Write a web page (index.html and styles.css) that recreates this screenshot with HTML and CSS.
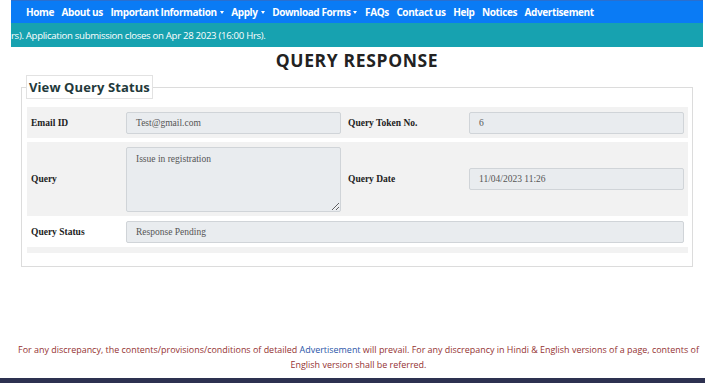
FILE: index.html
```html
<!DOCTYPE html>
<html>
<head>
<meta charset="utf-8">
<link rel="stylesheet" href="styles.css">
</head>
<body>
<div class="page">
  <nav class="nav">
    <a class="nav-link">Home</a>
    <a class="nav-link">About us</a>
    <a class="nav-link dd">Important Information</a>
    <a class="nav-link dd">Apply</a>
    <a class="nav-link dd">Download Forms</a>
    <a class="nav-link">FAQs</a>
    <a class="nav-link">Contact us</a>
    <a class="nav-link">Help</a>
    <a class="nav-link">Notices</a>
    <a class="nav-link">Advertisement</a>
  </nav>
  <div class="ticker"><span class="ticker-text">rs). Application submission closes on Apr 28 2023 (16:00 Hrs).</span></div>
  <h1 class="title">QUERY RESPONSE</h1>
  <fieldset class="box">
    <legend class="legend">View Query Status</legend>
    <div class="row gray r1">
      <div class="lbl">Email ID</div>
      <div class="cell"><div class="ctl">Test@gmail.com</div></div>
      <div class="lbl lbl2">Query Token No.</div>
      <div class="cell"><div class="ctl">6</div></div>
    </div>
    <div class="row gray r2">
      <div class="lbl">Query</div>
      <div class="cell"><textarea class="ctl area" readonly>Issue in registration</textarea></div>
      <div class="lbl lbl2">Query Date</div>
      <div class="cell"><div class="ctl">11/04/2023 11:26</div></div>
    </div>
    <div class="row r3">
      <div class="lbl">Query Status</div>
      <div class="cell wide"><div class="ctl">Response Pending</div></div>
    </div>
    <div class="row gray r4"></div>
  </fieldset>
</div>
<p class="note">For any discrepancy, the contents/provisions/conditions of detailed <a class="link">Advertisement</a> will prevail. For any discrepancy in Hindi &amp; English versions of a page, contents of English version shall be referred.</p>
<div class="bottom-bar"></div>
</body>
</html>
```
FILE: styles.css
```css
html, body {
  margin: 0;
  padding: 0;
  background: #fff;
  height: 383px;
  overflow: hidden;
}
body {
  font-family: "Open Sans", "Liberation Sans", sans-serif;
  position: relative;
}
.page {
  margin-left: 11px;
  width: 692px;
}
.nav {
  height: 23px;
  background: #0a7bf5;
  display: flex;
  align-items: center;
  gap: 7.6px;
  padding-left: 15px;
  border-top: 1px solid #2a6fcf;
  box-sizing: border-box;
}
.nav-link {
  color: #fff;
  font-weight: 700;
  font-size: 10px;
  letter-spacing: -0.4px;
  white-space: nowrap;
  display: flex;
  align-items: center;
}
.nav-link.dd::after {
  content: "";
  margin-left: 3px;
  border-left: 2.5px solid transparent;
  border-right: 2.5px solid transparent;
  border-top: 3px solid #fff;
}
.ticker {
  height: 24px;
  background: #17a2b0;
  display: flex;
  align-items: center;
  overflow: hidden;
}
.ticker-text {
  color: #fff;
  font-size: 9.6px;
  letter-spacing: -0.3px;
  white-space: nowrap;
}
.title {
  margin: 1px 0 0 0;
  text-align: center;
  font-size: 17.5px;
  font-weight: 700;
  color: #222;
  line-height: 25px;
  letter-spacing: 0.65px;
}
.box {
  margin: 2px 10px 0 10px;
  padding: 0 4px 13px 5px;
  border: 1px solid #dcdcdc;
  min-width: 0;
}
.legend {
  margin-left: -1px;
  padding: 1px 2px 1px 2px;
  border: 1px solid #e2e2e2;
  font-size: 13px;
  font-weight: 700;
  color: #23393b;
  line-height: 20px;
  letter-spacing: 0.1px;
}
.row {
  display: grid;
  grid-template-columns: 99px 215px 128px 215px;
  align-items: center;
  box-sizing: border-box;
}
.gray { background: #f2f2f2; }
.r1 { margin-top: 8px; height: 31px; }
.r2 { margin-top: 4px; height: 74px; }
.r3 { height: 31px; }
.r4 { height: 6px; margin-top: 0; }
.lbl {
  font-family: "Liberation Serif", serif;
  font-weight: 700;
  font-size: 9.5px;
  color: #222;
  padding-left: 4px;
}
.lbl2 { padding-left: 7px; }
.wide { grid-column: 2 / 5; }
.ctl {
  box-sizing: border-box;
  height: 22px;
  background: #e9ecef;
  border: 1px solid #d0d4d8;
  border-radius: 2px;
  font-family: "Liberation Serif", serif;
  font-size: 9.5px;
  color: #555;
  padding: 0 9px;
  display: flex;
  align-items: center;
}
.area {
  display: block;
  width: 100%;
  height: 65px;
  resize: vertical;
  padding: 5px 9px;
  margin: 0;
  outline: none;
  line-height: 13px;
}
.note {
  margin: 75px 0 0 0;
  padding: 0 0 0 12px;
  text-align: center;
  font-size: 8.95px;
  line-height: 15px;
  color: #943232;
}
.link { color: #2a55a8; }
.bottom-bar {
  position: absolute;
  left: 0;
  right: 0;
  bottom: 0;
  height: 5px;
  background: #2d3150;
}
```
